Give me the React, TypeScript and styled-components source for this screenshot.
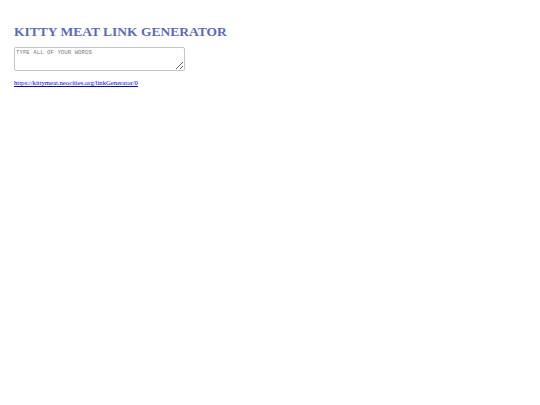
import React from 'react';
import styled, { createGlobalStyle } from 'styled-components';

const GlobalStyle = createGlobalStyle`
    html, body {
        margin: 0;
        background: #ffffff;
    }
`;

const PageStyle = styled.div`
    padding: 25px 14px;
    font-family: 'Liberation Serif', 'Times New Roman', serif;
`;

const TitleStyle = styled.h1`
    font-size: 13.5px;
    font-weight: bold;
    color: #5b6bb5;
    margin: 0 0 8.5px 0;
    line-height: 1;
`;

const WordsInputStyle = styled.textarea`
    display: block;
    box-sizing: border-box;
    width: 171px;
    height: 24px;
    padding: 1px 1px;
    border: 1px solid #c4c4c4;
    border-radius: 2px;
    font-family: 'Liberation Mono', 'Courier New', monospace;
    font-size: 5.75px;
    resize: vertical;

    &::placeholder {
        color: #808080;
    }
`;

const LinkStyle = styled.a`
    display: inline-block;
    margin-top: 7px;
    font-size: 6.7px;
    color: #0000ee;
`;

const App: React.FC = () => {
    return (
        <PageStyle>
            <GlobalStyle />
            <TitleStyle>KITTY MEAT LINK GENERATOR</TitleStyle>
            <WordsInputStyle placeholder="TYPE ALL OF YOUR WORDS" />
            <LinkStyle href="https://kittymeat.neocities.org/linkGenerator/0">
                https://kittymeat.neocities.org/linkGenerator/0
            </LinkStyle>
        </PageStyle>
    );
};

export default App;
